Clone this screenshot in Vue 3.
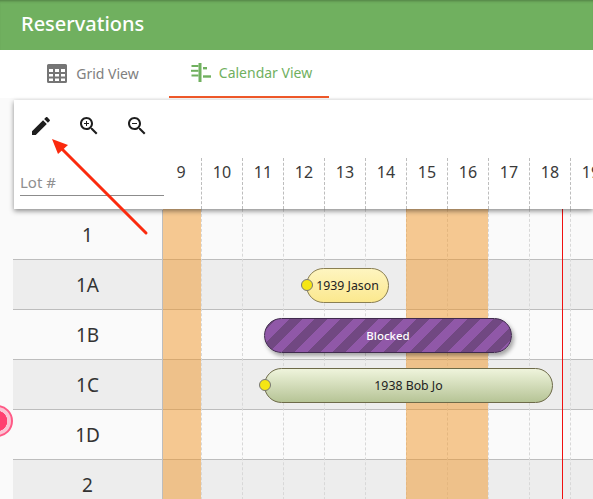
<script setup>
import { ref } from "vue";

const hourWidth = 41;
const hours = [9, 10, 11, 12, 13, 14, 15, 16, 17, 18, 19];
const lots = ref(["1", "1A", "1B", "1C", "1D", "2"]);

// timeline x offsets are from the left edge of the lanes
const bars = [
  { label: "1939 Jason", kind: "pending", row: 1, left: 143, width: 83, dot: true },
  { label: "Blocked", kind: "blocked", row: 2, left: 101, width: 248, dot: false },
  { label: "1938 Bob Jo", kind: "confirmed", row: 3, left: 101, width: 289, dot: true },
];
const shaded = [
  { left: 0, width: 38 },
  { left: 243, width: 82 },
];

const barStyle = (bar) => ({
  left: `${bar.left}px`,
  width: `${bar.width}px`,
  top: `${bar.row * 50 + 9}px`,
});
</script>

<template>
  <div class="page">
    <header class="app-bar">Reservations</header>

    <nav class="tabs">
      <a class="tab">
        <svg viewBox="0 0 20 19" class="tab-icon">
          <path d="M1.500 0h17A1.500 1.500 0 0 1 20 1.500v16a1.500 1.500 0 0 1-1.500 1.500h-17A1.500 1.500 0 0 1 0 17.500v-16A1.500 1.500 0 0 1 1.500 0zM2 5v3h4V5zm6 0v3h4V5zm6 0v3h4V5zM2 10v2.500h4V10zm6 0v2.500h4V10zm6 0v2.500h4V10zM2 14.500V17h4v-2.500zm6 0V17h4v-2.500zm6 0V17h4v-2.500z" fill-rule="evenodd" />
        </svg>
        <span>Grid View</span>
      </a>
      <a class="tab active">
        <svg viewBox="0 0 20 19" class="tab-icon">
          <rect x="7.500" y="0" width="3" height="19" />
          <rect x="0.500" y="2" width="7" height="2" />
          <rect x="0" y="6.800" width="7.500" height="2" />
          <rect x="0.500" y="11.500" width="7" height="2" />
          <rect x="12" y="4" width="4" height="2.400" />
          <rect x="12" y="12.300" width="8" height="2.400" />
        </svg>
        <span>Calendar View</span>
      </a>
    </nav>

    <main class="schedule">
      <section class="toolbar-card">
        <div class="tools">
          <button class="tool">
            <svg viewBox="0 0 24 24"><path d="M3 17.250V21h3.750L17.810 9.940l-3.750-3.750L3 17.250zM20.710 7.040c.39-.39.39-1.020 0-1.410l-2.340-2.340c-.39-.39-1.020-.39-1.410 0l-1.830 1.830 3.750 3.750 1.830-1.830z" /></svg>
          </button>
          <button class="tool">
            <svg viewBox="0 0 24 24"><path d="M15.500 14h-.79l-.28-.27C15.410 12.590 16 11.110 16 9.500 16 5.910 13.090 3 9.500 3S3 5.910 3 9.500 5.910 16 9.500 16c1.610 0 3.090-.59 4.230-1.570l.27.28v.79l5 4.990L20.490 19l-4.990-5zm-6 0C7.010 14 5 11.990 5 9.500S7.010 5 9.500 5 14 7.010 14 9.500 11.990 14 9.500 14z" /><path d="M12 10h-2v2H9v-2H7V9h2V7h1v2h2v1z" /></svg>
          </button>
          <button class="tool">
            <svg viewBox="0 0 24 24"><path d="M15.500 14h-.79l-.28-.27C15.410 12.590 16 11.110 16 9.500 16 5.910 13.090 3 9.500 3S3 5.910 3 9.500 5.910 16 9.500 16c1.610 0 3.090-.59 4.230-1.570l.27.28v.79l5 4.990L20.490 19l-4.990-5zm-6 0C7.010 14 5 11.990 5 9.500S7.010 5 9.500 5 14 7.010 14 9.500 11.990 14 9.500 14z" /><path d="M7 9h5v1H7z" /></svg>
          </button>
        </div>
        <div class="head-row">
          <div class="lot-field">Lot #</div>
          <div class="hours">
            <div v-for="h in hours" :key="h" class="hour" :style="{ width: hourWidth + 'px' }">{{ h }}</div>
          </div>
        </div>
      </section>

      <div class="rows">
        <div v-for="lot in lots" :key="lot" class="row">
          <div class="lot">{{ lot }}</div>
        </div>

        <div class="timeline">
          <div
            v-for="(h, i) in hours"
            :key="h"
            class="gridline"
            :style="{ left: 38 + i * hourWidth + 'px' }"
          ></div>
          <div v-for="s in shaded" :key="s.left" class="shade" :style="{ left: s.left + 'px', width: s.width + 'px' }"></div>
          <div class="now"></div>
          <div v-for="bar in bars" :key="bar.label" class="bar" :class="bar.kind" :style="barStyle(bar)">
            <span v-if="bar.dot" class="dot"></span>
            {{ bar.label }}
          </div>
        </div>
      </div>
    </main>

    <div class="record-dot"></div>

    <svg class="arrow" width="593" height="499" viewBox="0 0 593 499">
      <path d="M146 233 L60 147" stroke="#fb2a0e" stroke-width="3" stroke-linecap="round" fill="none" />
      <path d="M52 139 L68 145 L58 154 Z" fill="#fb2a0e" />
    </svg>
  </div>
</template>

<style>
html,
body {
  margin: 0;
  overflow: hidden;
}
</style>

<style scoped>
.page {
  position: relative;
  width: 593px;
  height: 499px;
  overflow: hidden;
  background: #fafafa;
  font-family: "Noto Sans", "Open Sans", sans-serif;
  color: #333;
}

.app-bar {
  height: 50px;
  box-sizing: border-box;
  padding: 10px 0 0 21px;
  background: #70b05f;
  box-shadow: inset 0 3px 3px -2px rgba(0, 0, 0, 0.3);
  color: #fff;
  font-size: 20px;
  font-weight: 500;
}

.tabs {
  display: flex;
  gap: 3px;
  height: 48px;
  background: #fff;
  box-sizing: border-box;
  padding-left: 20px;
}
.tab {
  display: flex;
  align-items: center;
  justify-content: center;
  gap: 9px;
  width: 146px;
  height: 48px;
  padding-bottom: 2px;
  box-sizing: border-box;
  font-size: 14px;
  color: #808080;
  fill: #757575;
}
.tab.active {
  width: 160px;
  padding-left: 5px;
  gap: 8px;
  color: #70b05f;
  fill: #70b05f;
  border-bottom: 2px solid #f0592a;
}
.tab-icon {
  width: 20px;
  height: 19px;
}

.schedule {
  padding: 2px 0 0 14px;
}

.toolbar-card {
  position: relative;
  z-index: 3;
  height: 109px;
  width: 579px;
  background: #fff;
  box-shadow: 0 2px 5px rgba(0, 0, 0, 0.45);
  overflow: hidden;
}
.tools {
  display: flex;
  padding: 2px 0 0 3px;
}
.tool {
  width: 48px;
  height: 48px;
  padding: 12px;
  border: 0;
  background: none;
}
.tool svg {
  display: block;
  width: 24px;
  height: 24px;
  fill: #1e1e1e;
}

.head-row {
  display: flex;
  margin-top: 8px;
  height: 51px;
}
.lot-field {
  flex: none;
  width: 144px;
  height: 38px;
  margin-left: 6px;
  padding-top: 14px;
  box-sizing: border-box;
  border-bottom: 1px solid #8c8c8c;
  font-size: 15px;
  color: #8f8f8f;
}
.hours {
  display: flex;
  margin-left: -3px;
}
.hour {
  flex: none;
  box-sizing: border-box;
  padding-top: 3px;
  border-right: 1px dashed #bdbdbd;
  text-align: center;
  font-size: 16px;
  color: #3a3a3a;
}

.rows {
  position: relative;
  margin: 1px 0 0 -1px;
}
.row {
  display: flex;
  height: 50px;
  box-sizing: border-box;
  border-bottom: 1px solid #bdbdbd;
  background: #fafafa;
}
.row:nth-child(even) {
  background: #ededed;
}
.lot {
  flex: none;
  width: 150px;
  box-sizing: border-box;
  border-right: 1px solid #bdbdbd;
  text-align: center;
  line-height: 50px;
  font-size: 19px;
  color: #333;
}

.timeline {
  position: absolute;
  left: 150px;
  top: -1px;
  right: 0;
  bottom: 0;
}
.gridline {
  position: absolute;
  top: 0;
  bottom: 0;
  border-left: 1px dashed #d8d8d8;
}
.shade {
  position: absolute;
  top: 0;
  bottom: 0;
  background: rgba(240, 150, 40, 0.5);
}
.now {
  position: absolute;
  left: 399px;
  top: 0;
  bottom: 0;
  width: 1px;
  background: #f01010;
}

.bar {
  position: absolute;
  height: 35px;
  box-sizing: border-box;
  display: flex;
  align-items: center;
  justify-content: center;
  border: 1px solid #6d6a48;
  border-radius: 17.500px;
  font-size: 12.300px;
  color: #222;
}
.bar.pending {
  background: linear-gradient(to bottom, #fef5c0, #fbe88e);
  border-color: #8a7f52;
}
.bar.confirmed {
  background: linear-gradient(to bottom, #eff4dc, #b6c496);
}
.bar.blocked {
  border-color: #3f2a4d;
  background: repeating-linear-gradient(-45deg, #9058a8 0 9px, #714882 9px 18px);
  box-shadow: 2px 3px 4px rgba(0, 0, 0, 0.35);
  color: #fff;
  font-size: 11.500px;
  font-weight: 500;
}
.dot {
  position: absolute;
  left: -6px;
  top: 10px;
  width: 12px;
  height: 12px;
  box-sizing: border-box;
  border: 1px solid #777;
  border-radius: 50%;
  background: #f5e614;
}

.record-dot {
  position: absolute;
  left: -19px;
  top: 405px;
  width: 32px;
  height: 32px;
  box-sizing: border-box;
  border-radius: 50%;
  border: 2px solid #ff5a86;
  background: radial-gradient(circle, #ff3f70 0 10px, #fbc4d4 10.500px);
}

.arrow {
  position: absolute;
  left: 0;
  top: 0;
  z-index: 5;
  pointer-events: none;
}
</style>
